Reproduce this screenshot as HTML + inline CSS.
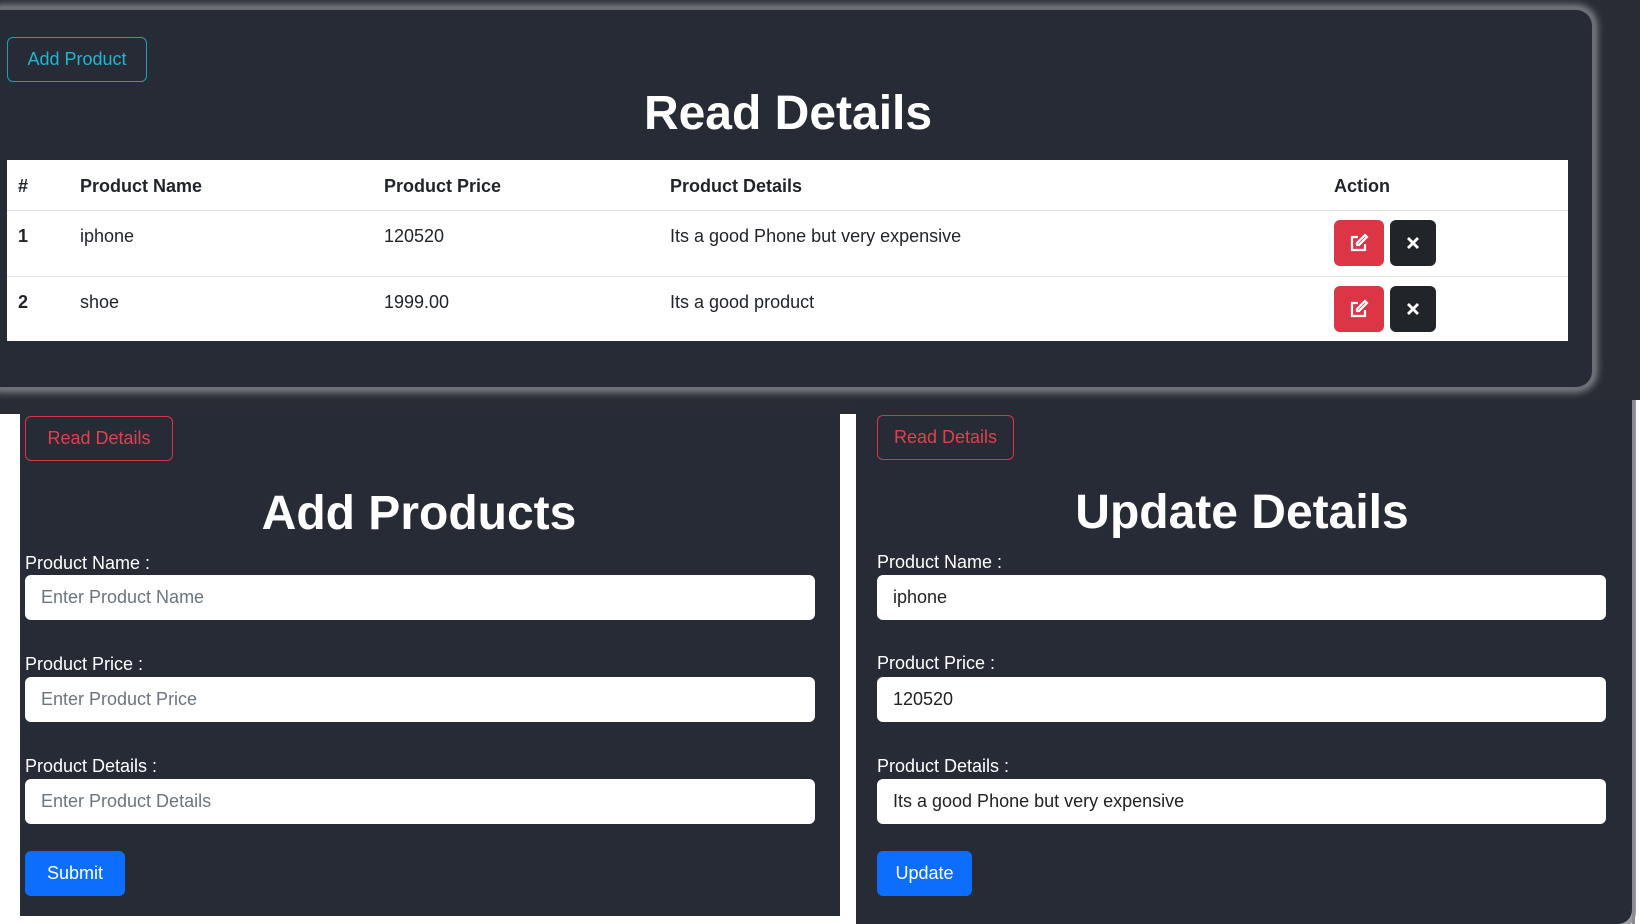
<!DOCTYPE html>
<html><head><meta charset="utf-8"><style>
*{box-sizing:border-box;margin:0;padding:0}
body{width:1640px;height:924px;position:relative;overflow:hidden;background:#fff;font-family:"Liberation Sans",sans-serif;}
.abs{position:absolute}
.panel{background:#272b35}
.top{left:0;top:10px;width:1592px;height:377px;border-radius:0 16px 16px 0;box-shadow:0 0 0 3px #6b6e75,0 0 8px 5px #8a8c92}
.btn{position:absolute;border-radius:6px;font-size:18px;display:flex;align-items:center;justify-content:center}
.ob{border:1.5px solid}
h1{position:absolute;color:#fff;font-size:48px;font-weight:bold;transform:translateX(-50%);white-space:nowrap;line-height:1}
table{position:absolute;left:7px;top:160px;width:1561px;background:#fff;border-collapse:collapse;font-size:18px;color:#212529}
td,th{text-align:left;padding:0;vertical-align:top}
tr{border-bottom:1px solid #dee2e6}
.lbl{position:absolute;color:#fff;font-size:18px}
.in{position:absolute;background:#fff;border-radius:6px;height:45px;font-size:18px;padding-left:16px;display:flex;align-items:center;color:#222}
.ph{color:#6c757d}
.ib{position:absolute;width:50px;height:46px;border-radius:6px;display:flex;align-items:center;justify-content:center}
</style></head><body>
<div class="abs" style="left:0;top:0;width:1640px;height:416px;background:#292c34"></div>
<div class="abs panel top"></div>
<div class="btn ob" style="left:7px;top:37px;width:140px;height:45px;border-color:#17a2b8;color:#1fb6d6">Add Product</div>
<h1 style="left:788px;top:90px">Read Details</h1>
<table>
<tr style="height:50px"><th style="width:73px;padding:16px 0 0 11px">#</th><th style="width:304px;padding-top:16px">Product Name</th><th style="width:286px;padding-top:16px">Product Price</th><th style="width:664px;padding-top:16px">Product Details</th><th style="padding-top:16px">Action</th></tr>
<tr style="height:66px"><td style="padding:15px 0 0 11px;font-weight:bold">1</td><td style="padding-top:15px">iphone</td><td style="padding-top:15px">120520</td><td style="padding-top:15px">Its a good Phone but very expensive</td><td></td></tr>
<tr style="height:65px;border:none"><td style="padding:15px 0 0 11px;font-weight:bold">2</td><td style="padding-top:15px">shoe</td><td style="padding-top:15px">1999.00</td><td style="padding-top:15px">Its a good product</td><td></td></tr>
</table>
<div class="ib" style="left:1334px;top:220px;background:#dc3545"><svg width="20" height="20" viewBox="0 0 20 20" fill="none" stroke="#fff" stroke-width="2.2"><path d="M9 4H3v13h13v-6"/><path d="M16 2l2 2-8 8H8v-2z"/></svg></div>
<div class="ib" style="left:1390px;top:220px;width:46px;background:#212529"><svg width="14" height="14" viewBox="0 0 14 14" stroke="#fff" stroke-width="2.8"><path d="M2 2l10 10M12 2L2 12"/></svg></div>
<div class="ib" style="left:1334px;top:286px;background:#dc3545"><svg width="20" height="20" viewBox="0 0 20 20" fill="none" stroke="#fff" stroke-width="2.2"><path d="M9 4H3v13h13v-6"/><path d="M16 2l2 2-8 8H8v-2z"/></svg></div>
<div class="ib" style="left:1390px;top:286px;width:46px;background:#212529"><svg width="14" height="14" viewBox="0 0 14 14" stroke="#fff" stroke-width="2.8"><path d="M2 2l10 10M12 2L2 12"/></svg></div>

<div class="abs" style="left:0;top:414px;width:856px;height:510px;background:#fff"></div>
<div class="abs" style="left:1632px;top:400px;width:8px;height:524px;background:#fff"></div>
<div class="abs panel" style="left:20px;top:414px;width:820px;height:502px"></div>
<div class="abs panel" style="left:856px;top:400px;width:776px;height:524px;border-radius:0 0 14px 0;box-shadow:2px 2px 0 2px #9a9ca2"></div>
<div class="abs" style="left:1632px;top:400px;width:3px;height:524px;background:#8a8c92"></div>

<div class="btn ob" style="left:25px;top:416px;width:148px;height:45px;border-color:#dc3545;color:#e0404f">Read Details</div>
<h1 style="left:419px;top:490px">Add Products</h1>
<div class="lbl" style="left:25px;top:553px">Product Name :</div>
<div class="in" style="left:25px;top:575px;width:790px"><span class="ph">Enter Product Name</span></div>
<div class="lbl" style="left:25px;top:654px">Product Price :</div>
<div class="in" style="left:25px;top:677px;width:790px"><span class="ph">Enter Product Price</span></div>
<div class="lbl" style="left:25px;top:756px">Product Details :</div>
<div class="in" style="left:25px;top:779px;width:790px"><span class="ph">Enter Product Details</span></div>
<div class="btn" style="left:25px;top:851px;width:100px;height:45px;background:#0d6efd;color:#fff">Submit</div>

<div class="btn ob" style="left:877px;top:415px;width:137px;height:45px;border-color:#dc3545;color:#e0404f">Read Details</div>
<h1 style="left:1242px;top:489px">Update Details</h1>
<div class="lbl" style="left:877px;top:552px">Product Name :</div>
<div class="in" style="left:877px;top:575px;width:729px">iphone</div>
<div class="lbl" style="left:877px;top:653px">Product Price :</div>
<div class="in" style="left:877px;top:677px;width:729px">120520</div>
<div class="lbl" style="left:877px;top:756px">Product Details :</div>
<div class="in" style="left:877px;top:779px;width:729px">Its a good Phone but very expensive</div>
<div class="btn" style="left:877px;top:851px;width:95px;height:45px;background:#0d6efd;color:#fff">Update</div>
</body></html>
